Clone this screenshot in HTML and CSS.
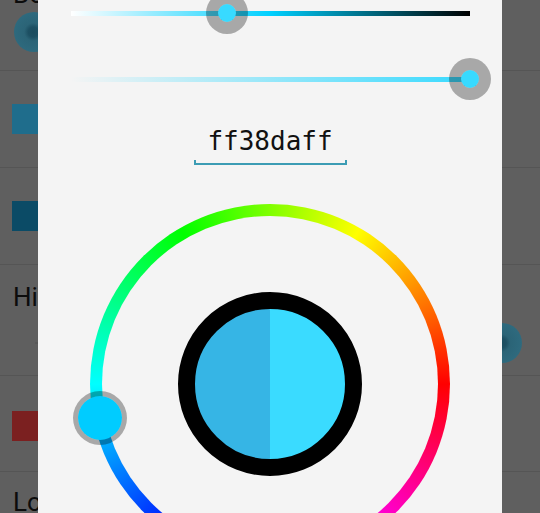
FILE: index.html
```html
<!DOCTYPE html>
<html lang="en">
<head>
  <meta charset="UTF-8" />
  <meta name="viewport" content="width=device-width, initial-scale=1" />
  <title>Color picker</title>
  <link rel="stylesheet" href="styles.css">
</head>
<body>
  <div class="list">
    <div class="row row-top">
      <div class="title title-cut">Border color</div>
      <div class="seek"><span class="knob"></span></div>
    </div>
    <div class="row row-swatch"><span class="swatch swatch-blue"></span></div>
    <div class="row row-swatch"><span class="swatch swatch-navy"></span></div>
    <div class="row row-hi">
      <div class="title">High color</div>
      <div class="seek seek-full"><span class="knob knob-right"></span></div>
    </div>
    <div class="row row-swatch row-red"><span class="swatch swatch-red"></span></div>
    <div class="row row-lo">
      <div class="title">Low color</div>
    </div>
  </div>

  <div class="dialog">
    <div class="slider">
      <div class="track track-sv"></div>
      <span class="thumb thumb-sv"></span>
    </div>
    <div class="slider slider-alpha">
      <div class="track track-alpha"></div>
      <span class="thumb thumb-alpha"></span>
    </div>

    <div class="hex-field">ff38daff</div>

    <div class="wheel">
      <div class="wheel-hole">
        <div class="preview"></div>
      </div>
      <span class="wheel-thumb"></span>
    </div>
  </div>
</body>
</html>
```

FILE: styles.css
```css
html, body {
  margin: 0;
  height: 100%;
}

body {
  background-color: #5f5f5f;
  font-family: Roboto, 'Liberation Sans', sans-serif;
  color: #0c0c0c;
  overflow: hidden;
  position: relative;
}

/* settings list behind the dialog */
.list {
  display: flex;
  flex-direction: column;
}

.row {
  border-bottom: 1px solid #555;
  box-sizing: border-box;
  display: flex;
  flex-direction: column;
  flex-shrink: 0;
  padding-left: 13px;
}

.row-top {
  height: 71px;
}

.row-swatch {
  height: 97px;
  justify-content: center;
  padding-left: 12px;
}

.row-hi {
  height: 111px;
  padding-top: 17px;
}

.row-red {
  height: 96px;
  padding-top: 4px;
}

.row-lo {
  border-bottom: none;
  padding-top: 15px;
}

.title {
  font-size: 26px;
  line-height: 30px;
  white-space: nowrap;
}

.title-cut {
  margin-top: -21px;
}

.seek {
  position: relative;
  height: 40px;
  margin-top: 3px;
}

.knob {
  display: block;
  width: 40px;
  height: 40px;
  margin-left: 1px;
  border-radius: 50%;
  background: radial-gradient(circle at 48% 50%, #1b4c5e 0, #1d5063 5px, #2b6477 9px, #2e6a7e 70%, #3f6a78 100%);
}

.seek-full {
  margin-top: 11px;
}

.seek-full::before {
  content: "";
  position: absolute;
  left: 22px;
  top: 19px;
  width: 470px;
  height: 2px;
  background: #585858;
}

.knob-right {
  position: absolute;
  left: 469px;
  top: 0;
  margin: 0;
}

.swatch {
  display: block;
  width: 30px;
  height: 30px;
}

.swatch-blue { background-color: #1f6d8c; }
.swatch-navy { background-color: #0b4b66; }
.swatch-red { background-color: #7b2020; }

/* color picker dialog */
.dialog {
  position: absolute;
  top: 0;
  left: 38px;
  width: 464px;
  height: 100%;
  background-color: #f4f4f4;
  display: flex;
  flex-direction: column;
  align-items: center;
}

.dialog > * {
  flex-shrink: 0;
}

.slider {
  position: relative;
  width: 399px;
  height: 26px;
  display: flex;
  align-items: center;
}

.slider-alpha {
  margin-top: 40px;
}

.track {
  width: 100%;
  height: 5px;
}

.track-sv {
  background: linear-gradient(to right, #ffffff 0%, #00d0ff 50%, #000000 100%);
}

.track-alpha {
  background: linear-gradient(to right, rgba(56, 218, 255, 0) 0%, #38daff 100%);
}

.thumb {
  position: absolute;
  top: -8px;
  width: 18px;
  height: 18px;
  border: 12px solid rgba(0, 0, 0, 0.31);
  border-radius: 50%;
  background-color: #38daff;
  background-clip: padding-box;
}

.thumb-sv { left: 135px; }
.thumb-alpha { left: 378px; }

.hex-field {
  position: relative;
  margin-top: 34px;
  width: 153px;
  padding-bottom: 7px;
  font-family: 'DejaVu Sans Mono', 'Liberation Mono', monospace;
  font-size: 26px;
  line-height: 30px;
  text-align: center;
  color: #111;
}

.hex-field::after {
  content: "";
  position: absolute;
  left: 0;
  right: 0;
  bottom: -2px;
  height: 5px;
  box-sizing: border-box;
  border: 2px solid #3c9cb4;
  border-top: none;
}

.wheel {
  position: relative;
  margin-top: 41px;
  width: 360px;
  height: 360px;
  border-radius: 50%;
  background: conic-gradient(from 90deg, #ff0000, #ff00ff, #0000ff, #00ffff, #00ff00, #ffff00, #ff0000);
  display: flex;
  align-items: center;
  justify-content: center;
}

.wheel-hole {
  width: 336px;
  height: 336px;
  border-radius: 50%;
  background-color: #f4f4f4;
  display: flex;
  align-items: center;
  justify-content: center;
}

.preview {
  width: 150px;
  height: 150px;
  border: 17px solid #000;
  border-radius: 50%;
  background: linear-gradient(to right, #36b5e5 50%, #3adbff 50%);
}

.wheel-thumb {
  position: absolute;
  left: -17px;
  top: 187px;
  width: 44px;
  height: 44px;
  border: 5px solid rgba(0, 0, 0, 0.31);
  border-radius: 50%;
  background-color: #00ccff;
  background-clip: padding-box;
}
```
